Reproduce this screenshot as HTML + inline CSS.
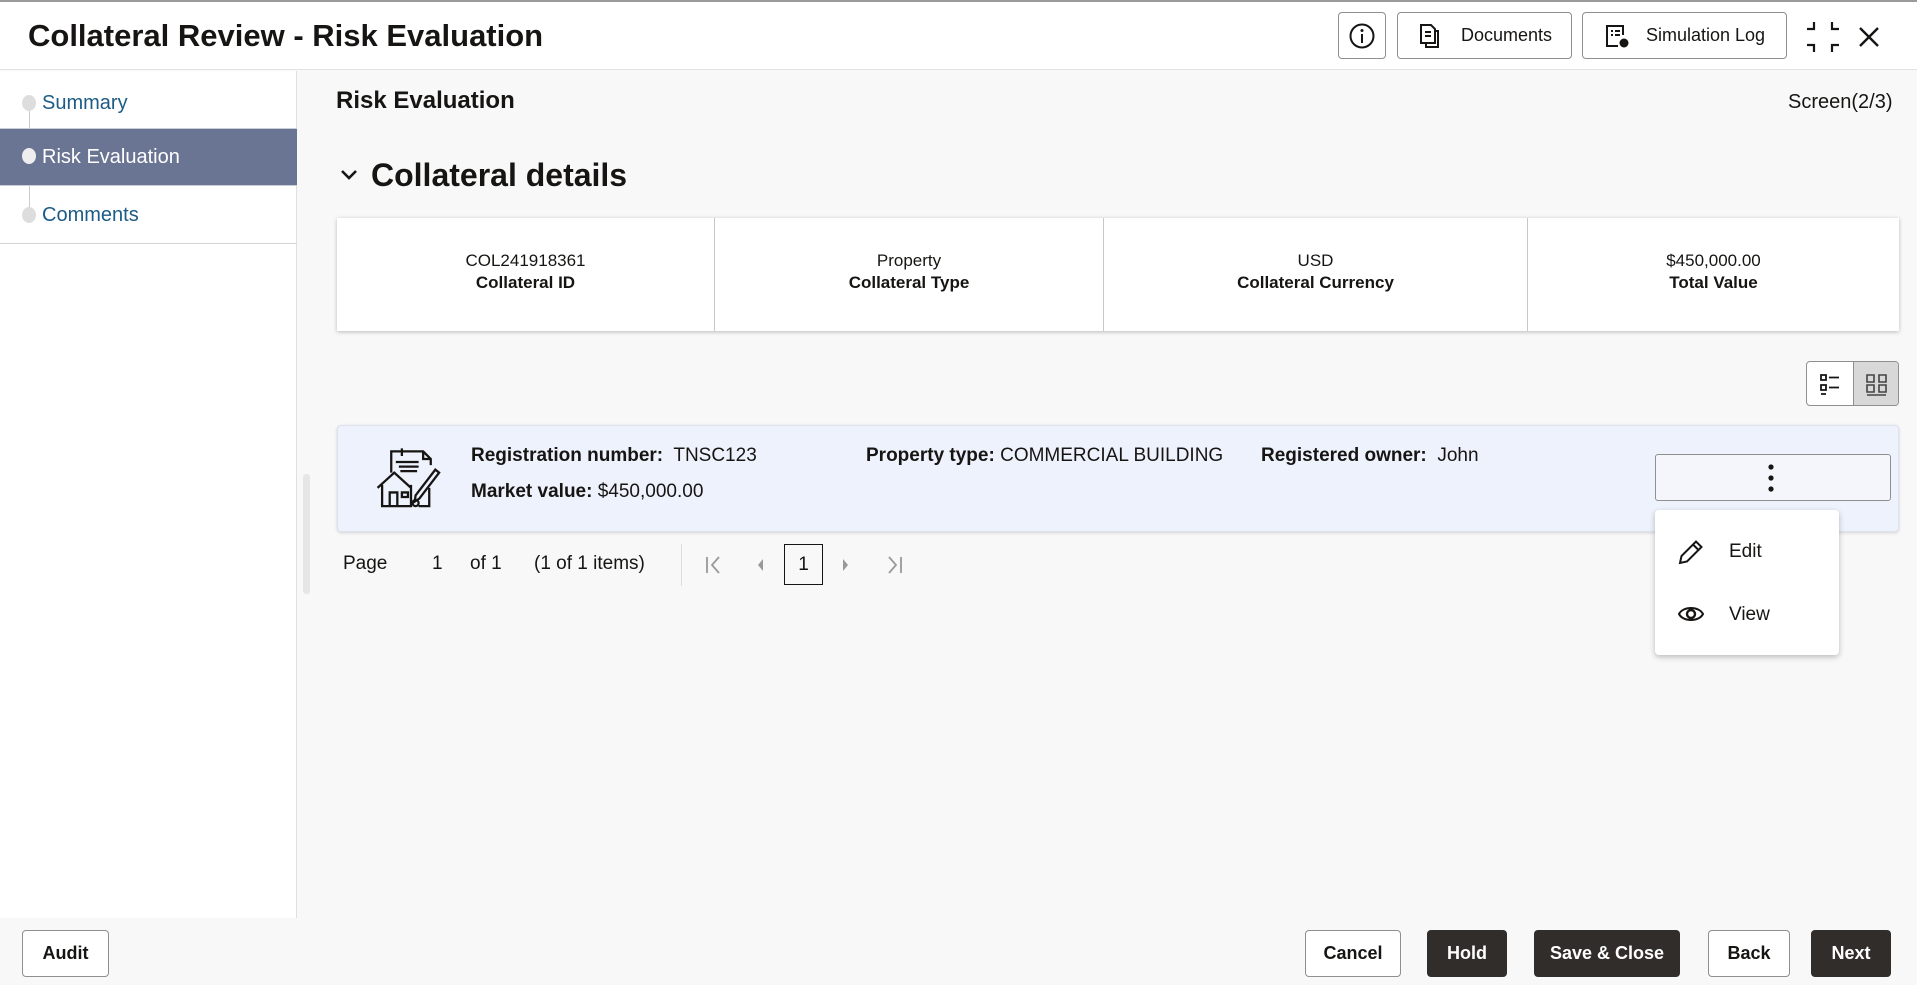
<!DOCTYPE html>
<html><head><meta charset="utf-8"><style>
*{box-sizing:border-box;margin:0;padding:0}
body{width:1917px;height:985px;overflow:hidden;font-family:"Liberation Sans",sans-serif;color:#161513;background:#f8f8f8;position:relative}
.abs{position:absolute}
.hdr{left:0;top:0;width:1917px;height:70px;background:#fff;border-top:2px solid #9a9a9a;border-bottom:1px solid #e2e2e2}
.btn{position:absolute;border:1px solid #8f8f8f;border-radius:4px;background:#fff;display:flex;align-items:center;justify-content:center;font-size:18px}
.side{left:0;top:71px;width:297px;height:847px;background:#fff;border-right:1px solid #e0e0e0}
.nav{position:absolute;left:0;width:297px;font-size:20px;color:#1c5b86;padding-left:42px;display:flex;align-items:center}
.dot{position:absolute;left:22px;width:14px;height:16px;border-radius:50%;background:#ddd}
.tbl{left:337px;top:218px;width:1562px;height:113px;background:#fff;box-shadow:0 1px 4px rgba(0,0,0,.25);display:flex}
.tbl div{display:flex;flex-direction:column;align-items:center;justify-content:center;font-size:17px;line-height:22px;border-right:1px solid #c8c8c8;padding-bottom:6px}
.tbl b{font-weight:bold}
.card{left:337px;top:425px;width:1562px;height:107px;background:#eef2fc;border:1px solid #dde2ee;border-radius:4px;box-shadow:0 1px 3px rgba(0,0,0,.15)}
.t{position:absolute;font-size:19px;white-space:nowrap}
.fb{position:absolute;top:930px;height:47px;border-radius:4px;font-size:18px;font-weight:bold;display:flex;align-items:center;justify-content:center}
.lt{background:#fff;border:1px solid #8f8f8f;color:#161513}
.dk{background:#312d2a;color:#fff}
</style></head><body>
<div class="abs hdr">
 <div class="abs" style="left:28px;top:16px;font-size:31px;font-weight:bold">Collateral Review - Risk Evaluation</div>
 <div class="btn" style="left:1338px;top:10px;width:48px;height:47px"><svg width="28" height="28" viewBox="0 0 28 28"><circle cx="14" cy="14" r="11.5" fill="none" stroke="#161513" stroke-width="2"/><circle cx="14" cy="8.5" r="1.5" fill="#161513"/><path d="M14 12v9" stroke="#161513" stroke-width="2"/></svg></div>
 <div class="btn" style="left:1397px;top:10px;width:175px;height:47px"><svg width="26" height="26" viewBox="0 0 26 26" style="margin-right:18px"><path d="M4 2h10l4 4v14H4z M8 9h6 M8 13h6 M18 8h3v16H9v-4" fill="none" stroke="#161513" stroke-width="2"/></svg>Documents</div>
 <div class="btn" style="left:1582px;top:10px;width:205px;height:47px"><svg width="26" height="26" viewBox="0 0 26 26" style="margin-right:16px"><path d="M19 12V3H3v20h11 M7 8h2 M11 8h5 M7 12h2 M11 12h5" fill="none" stroke="#161513" stroke-width="2"/><circle cx="20" cy="20" r="4.5" fill="#161513"/></svg>Simulation Log</div>
 <svg class="abs" style="left:1805px;top:18px" width="36" height="34" viewBox="0 0 36 34"><path d="M9 2v7H2 M27 2v7h7 M2 25h7v7 M34 25h-7v7" fill="none" stroke="#161513" stroke-width="2.2"/></svg>
 <svg class="abs" style="left:1857px;top:23px" width="24" height="24" viewBox="0 0 24 24"><path d="M3 3l18 18M21 3L3 21" stroke="#161513" stroke-width="2.4"/></svg>
</div>
<div class="abs side">
 <div class="abs" style="left:29px;top:30px;width:1px;height:115px;background:#ccc"></div>
 <div class="nav" style="top:12px;height:40px"><span class="dot" style="top:12px"></span>Summary</div>
 <div class="nav" style="top:57px;height:58px;background:#6a7593;color:#fff;border-top:1px solid #c9cdd6;border-bottom:1px solid #c9cdd6"><span class="dot" style="top:19px;background:#eee"></span>Risk Evaluation</div>
 <div class="nav" style="top:124px;height:40px"><span class="dot" style="top:12px"></span>Comments</div>
 <div class="abs" style="left:0;top:172px;width:297px;height:1px;background:#d4d4d4"></div>
</div>
<div class="abs" style="left:303px;top:474px;width:7px;height:120px;background:#e6e6e6;border-radius:3px"></div>
<div class="abs" style="left:336px;top:87px;font-size:24px;font-weight:bold">Risk Evaluation</div>
<div class="abs" style="left:1788px;top:91px;font-size:20px">Screen(2/3)</div>
<svg class="abs" style="left:340px;top:168px" width="18" height="14" viewBox="0 0 18 14"><path d="M2 3l7 7 7-7" fill="none" stroke="#161513" stroke-width="2.6"/></svg>
<div class="abs" style="left:371px;top:157px;font-size:32px;font-weight:bold">Collateral details</div>
<div class="abs tbl">
 <div style="width:378px">COL241918361<b>Collateral ID</b></div>
 <div style="width:389px">Property<b>Collateral Type</b></div>
 <div style="width:424px">USD<b>Collateral Currency</b></div>
 <div style="width:371px;border-right:none">$450,000.00<b>Total Value</b></div>
</div>
<div class="abs" style="left:1806px;top:361px;width:93px;height:45px;border:1px solid #8f8f8f;border-radius:4px;background:#fff;overflow:hidden">
 <div class="abs" style="left:46px;top:0;width:47px;height:45px;background:#d8d8d8;border-left:1px solid #8f8f8f"></div>
 <svg class="abs" style="left:12px;top:11px" width="24" height="24" viewBox="0 0 24 24"><path d="M2 2h5v5H2z M2 12h5v5H2z M10 4.5h10 M10 14.5h10 M2 21h5" fill="none" stroke="#161513" stroke-width="1.8"/></svg>
 <svg class="abs" style="left:58px;top:11px" width="24" height="24" viewBox="0 0 24 24"><path d="M2 2h7v7H2z M14 2h7v7h-7z M2 12h7v7H2z M14 12h7v7h-7z M2 22h19" fill="none" stroke="#444" stroke-width="1.6"/></svg>
</div>
<div class="abs card">
 <svg class="abs" style="left:35px;top:14px" width="76" height="76" viewBox="0 0 100 90"><g fill="none" stroke="#161513" stroke-width="3"><path d="M24 38V10h42l10 10v8 M66 10v10h10 M38 6v10 M30 24h30 M34 30h26 M36 36h22 M74 58v24H60"/><path d="M6 58l22-20 22 20 M12 54v28h38V54 M22 82V64h10v18 M38 64h8v6h-8z M56 68l26-34 5 4-26 34-6 4z"/><circle cx="56" cy="78" r="4"/></g></svg>
 <div class="t" style="left:133px;top:19px"><b>Registration number:</b>&nbsp; TNSC123</div>
 <div class="t" style="left:133px;top:55px"><b>Market value:</b> $450,000.00</div>
 <div class="t" style="left:528px;top:19px"><b>Property type:</b> COMMERCIAL BUILDING</div>
 <div class="t" style="left:923px;top:19px"><b>Registered owner:</b>&nbsp; John</div>
 <div class="abs" style="left:1317px;top:28px;width:236px;height:47px;border:1px solid #8f8f8f;border-radius:3px;background:#f4f6fb"></div>
 <svg class="abs" style="left:1429px;top:37px" width="8" height="30" viewBox="0 0 8 30"><circle cx="4" cy="4" r="2.6" fill="#161513"/><circle cx="4" cy="15" r="2.6" fill="#161513"/><circle cx="4" cy="26" r="2.6" fill="#161513"/></svg>
</div>
<div class="abs" style="left:1655px;top:510px;width:184px;height:145px;background:#fff;border-radius:4px;box-shadow:0 2px 6px rgba(0,0,0,.25)">
 <svg class="abs" style="left:22px;top:28px" width="28" height="28" viewBox="0 0 28 28"><path d="M3 25l1.5-7L19 3.5l5.5 5.5L10 23.5z M16 6.5l5.5 5.5" fill="none" stroke="#161513" stroke-width="2"/></svg>
 <div class="abs" style="left:74px;top:31px;font-size:19px">Edit</div>
 <svg class="abs" style="left:22px;top:92px" width="28" height="24" viewBox="0 0 28 24"><path d="M2 12C6 4 22 4 26 12C22 20 6 20 2 12z" fill="none" stroke="#161513" stroke-width="2"/><circle cx="14" cy="12" r="4" fill="none" stroke="#161513" stroke-width="2.4"/></svg>
 <div class="abs" style="left:74px;top:94px;font-size:19px">View</div>
</div>
<div class="abs" style="left:343px;top:553px;font-size:19px">Page</div>
<div class="abs" style="left:432px;top:553px;font-size:19px">1</div>
<div class="abs" style="left:470px;top:553px;font-size:19px">of 1</div>
<div class="abs" style="left:534px;top:553px;font-size:19px">(1 of 1 items)</div>
<div class="abs" style="left:681px;top:544px;width:1px;height:42px;background:#ddd"></div>
<svg class="abs" style="left:704px;top:555px" width="20" height="20" viewBox="0 0 20 20"><path d="M3 2v16 M15 2l-7 8 7 8" fill="none" stroke="#999" stroke-width="1.8"/></svg>
<svg class="abs" style="left:755px;top:557px" width="10" height="16" viewBox="0 0 10 16"><path d="M8 2L3 8l5 6z" fill="#999"/></svg>
<div class="abs" style="left:784px;top:544px;width:39px;height:41px;border:1.5px solid #161513;font-size:19px;display:flex;align-items:center;justify-content:center">1</div>
<svg class="abs" style="left:841px;top:557px" width="10" height="16" viewBox="0 0 10 16"><path d="M2 2l5 6-5 6z" fill="#999"/></svg>
<svg class="abs" style="left:884px;top:555px" width="20" height="20" viewBox="0 0 20 20"><path d="M17 2v16 M5 2l7 8-7 8" fill="none" stroke="#999" stroke-width="1.8"/></svg>
<div class="fb lt" style="left:22px;width:87px">Audit</div>
<div class="fb lt" style="left:1305px;width:96px">Cancel</div>
<div class="fb dk" style="left:1427px;width:80px">Hold</div>
<div class="fb dk" style="left:1534px;width:146px">Save &amp; Close</div>
<div class="fb lt" style="left:1708px;width:82px">Back</div>
<div class="fb dk" style="left:1811px;width:80px">Next</div>
</body></html>
